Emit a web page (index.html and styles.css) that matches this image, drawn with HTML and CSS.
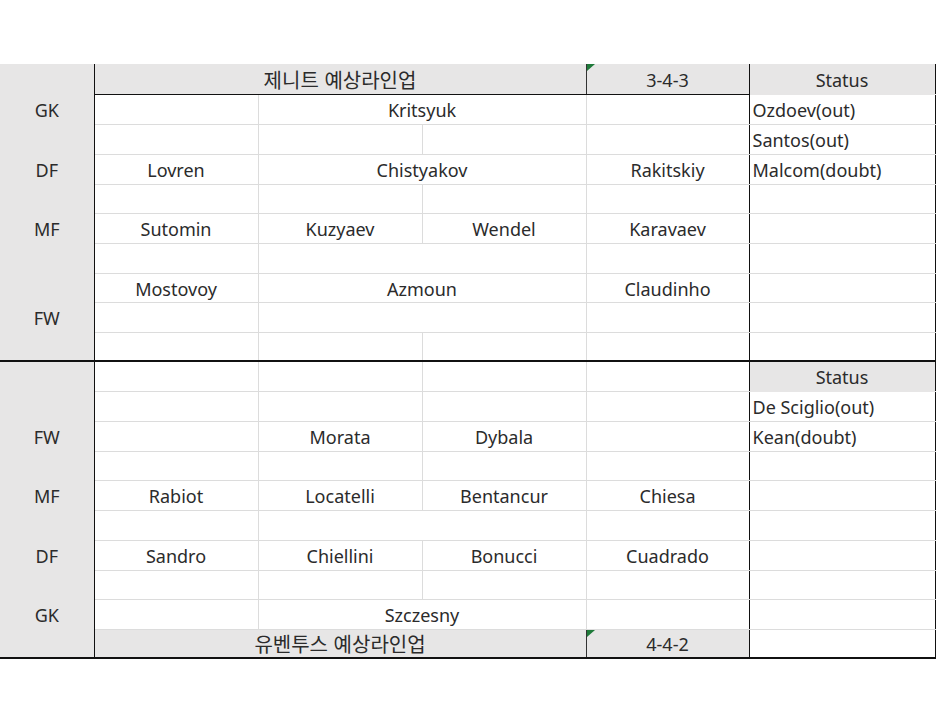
FILE: index.html
```html
<!DOCTYPE html>
<html lang="ko">
<head>
<meta charset="utf-8">
<title>예상라인업</title>
<link rel="stylesheet" href="styles.css">
</head>
<body>
<table class="sheet">
  <colgroup>
    <col class="c-a"><col class="c-p"><col class="c-p"><col class="c-p"><col class="c-e"><col class="c-f">
  </colgroup>
  <tbody>
    <tr class="h30">
      <td class="pos top"></td>
      <td class="title" colspan="3">제니트 예상라인업</td>
      <td class="title form">3-4-3</td>
      <td class="st-head top">Status</td>
    </tr>
    <tr class="h30">
      <td class="pos">GK</td><td></td><td colspan="2">Kritsyuk</td><td class="e"></td><td class="st">Ozdoev(out)</td>
    </tr>
    <tr class="h30">
      <td class="pos"></td><td></td><td></td><td></td><td class="e"></td><td class="st">Santos(out)</td>
    </tr>
    <tr class="h30">
      <td class="pos">DF</td><td>Lovren</td><td colspan="2">Chistyakov</td><td class="e">Rakitskiy</td><td class="st">Malcom(doubt)</td>
    </tr>
    <tr class="h29">
      <td class="pos"></td><td></td><td></td><td></td><td class="e"></td><td class="st"></td>
    </tr>
    <tr class="h30">
      <td class="pos">MF</td><td>Sutomin</td><td>Kuzyaev</td><td>Wendel</td><td class="e">Karavaev</td><td class="st"></td>
    </tr>
    <tr class="h30">
      <td class="pos"></td><td></td><td colspan="2"></td><td class="e"></td><td class="st"></td>
    </tr>
    <tr class="h29">
      <td class="pos"></td><td>Mostovoy</td><td colspan="2">Azmoun</td><td class="e">Claudinho</td><td class="st"></td>
    </tr>
    <tr class="h30">
      <td class="pos">FW</td><td></td><td colspan="2"></td><td class="e"></td><td class="st"></td>
    </tr>
    <tr class="h29 end">
      <td class="pos"></td><td></td><td></td><td></td><td class="e"></td><td class="st"></td>
    </tr>
    <tr class="h30">
      <td class="pos"></td><td></td><td></td><td></td><td class="e"></td><td class="st-head">Status</td>
    </tr>
    <tr class="h30">
      <td class="pos"></td><td></td><td></td><td></td><td class="e"></td><td class="st">De Sciglio(out)</td>
    </tr>
    <tr class="h30">
      <td class="pos">FW</td><td></td><td>Morata</td><td>Dybala</td><td class="e"></td><td class="st">Kean(doubt)</td>
    </tr>
    <tr class="h29">
      <td class="pos"></td><td></td><td></td><td></td><td class="e"></td><td class="st"></td>
    </tr>
    <tr class="h30">
      <td class="pos">MF</td><td>Rabiot</td><td>Locatelli</td><td>Bentancur</td><td class="e">Chiesa</td><td class="st"></td>
    </tr>
    <tr class="h30">
      <td class="pos"></td><td></td><td colspan="2"></td><td class="e"></td><td class="st"></td>
    </tr>
    <tr class="h30">
      <td class="pos">DF</td><td>Sandro</td><td>Chiellini</td><td>Bonucci</td><td class="e">Cuadrado</td><td class="st"></td>
    </tr>
    <tr class="h29">
      <td class="pos"></td><td></td><td></td><td></td><td class="e"></td><td class="st"></td>
    </tr>
    <tr class="h30">
      <td class="pos">GK</td><td></td><td colspan="2">Szczesny</td><td class="e"></td><td class="st"></td>
    </tr>
    <tr class="h29 end">
      <td class="pos"></td>
      <td class="foot" colspan="3">유벤투스 예상라인업</td>
      <td class="foot form">4-4-2</td>
      <td class="st"></td>
    </tr>
  </tbody>
</table>
</body>
</html>
```
FILE: styles.css
```css
html, body {
  margin: 0;
  padding: 0;
  background: #ffffff;
}

body {
  font-family: "Noto Sans", "Noto Sans CJK KR", sans-serif;
  color: #2b2b2b;
}

.sheet {
  margin-top: 64px;
  width: 935px;
  table-layout: fixed;
  border-collapse: collapse;
  font-size: 18px;
}

.c-a { width: 94px; }
.c-p { width: 164px; }
.c-e { width: 163px; }
.c-f { width: 186px; }

.h30 { height: 30px; }
.h29 { height: 29px; }

.sheet td {
  border: 1px solid #dcdcdc;
  padding: 2px 3px 0;
  text-align: center;
  vertical-align: middle;
  white-space: nowrap;
  overflow: hidden;
  line-height: 20px;
}

.sheet td.pos {
  background: #e7e6e6;
  border-top: none;
  border-bottom: none;
  border-left: none;
  border-right: 1px solid #111;
}

.sheet td.top {
  border-top: none;
}

.sheet td.title {
  background: #e7e6e6;
  border-top: none;
  border-bottom: 1px solid #111;
  border-right: 1px solid #333;
  font-family: "Noto Sans CJK KR", "Noto Sans", sans-serif;
  font-size: 20px;
}

.sheet td.foot {
  background: #e7e6e6;
  border-top: 1px solid #111;
  border-right: 1px solid #333;
  font-family: "Noto Sans CJK KR", "Noto Sans", sans-serif;
  font-size: 20px;
}

.sheet td.form {
  position: relative;
  font-family: "Noto Sans", sans-serif;
  font-size: 18px;
  border-right: 1px solid #111;
}

.sheet td.form::before {
  content: "";
  position: absolute;
  left: 0;
  top: 0;
  width: 0;
  height: 0;
  border-top: 7px solid #1f7a3a;
  border-right: 8px solid transparent;
}

.sheet td.e {
  border-right: 1px solid #111;
}

.sheet td.st {
  text-align: left;
  padding-left: 3px;
  border-left: 1px solid #111;
  border-right: 1px solid #111;
}

.sheet td.st-head {
  background: #e7e6e6;
  border-left: 1px solid #111;
  border-right: 1px solid #111;
  border-bottom: 1px solid #e7e6e6;
}

.sheet tr.end td {
  border-bottom: 2px solid #111;
}
```
